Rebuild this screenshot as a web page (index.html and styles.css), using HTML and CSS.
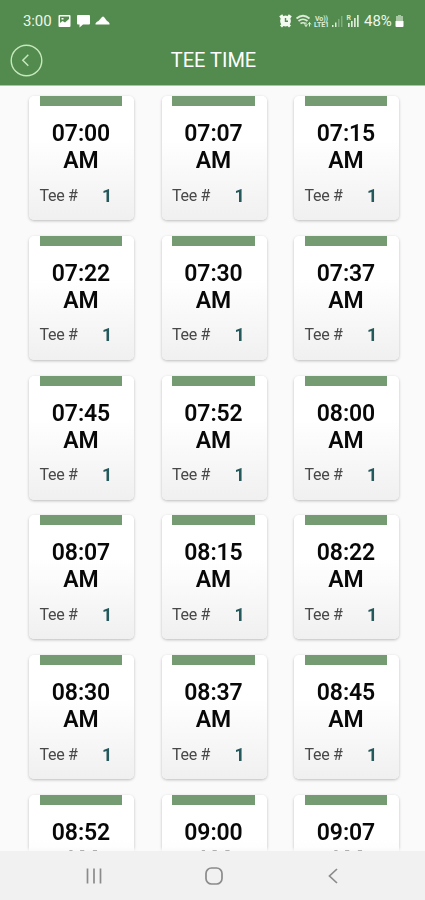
FILE: index.html
```html
<!DOCTYPE html>
<html lang="en">
<head>
    <meta charset="UTF-8">
    <meta name="viewport" content="width=device-width, initial-scale=1.0">
    <title>Tee Time</title>
    <link rel="stylesheet" href="styles.css">
</head>
<body>
    <header class="header">
        <div class="status-bar">
            <span class="clock">3:00</span>
            <svg class="status-left" width="54" height="14" viewBox="0 0 54 14">
                <path fill="#fff" fill-rule="evenodd" d="M2.500 1h10q1 0 1 1v10q0 1-1 1h-10q-1 0-1-1V2q0-1 1-1zM3 2.500v6.500l2.500-2 2.500 1.500 4-3.500v-2.500zM4.500 4h2v1.500h-2z"/>
                <path fill="#fff" d="M21 1h11q1 0 1 1v7.500q0 1-1 1h-6L22.500 13.500v-3H21q-1 0-1-1V2q0-1 1-1z"/>
                <path fill="#fff" d="M38.500 10.500q-.5-2 3-3.500l3.500-4q1-.8 2 0l3 4q3 1.500 2.500 3.500z"/>
            </svg>
            <svg class="status-right" width="85" height="16" viewBox="0 0 85 16">
                <circle cx="7.500" cy="8" r="5.400" fill="#f4faf1"/>
                <path d="M2 4.500l3-2M10 2.500l3 2M3 13.500l2-2M12 13.500l-2-2" stroke="#f4faf1" stroke-width="2.800"/>
                <path d="M7.500 5v3.300h2.500" fill="none" stroke="#528b4d" stroke-width="1.400"/>
                <g fill="none" stroke="#dcebd8" stroke-width="1.700">
                    <path d="M18.500 5.500q6.500-5.500 13 0M20.500 8q4.500-3.500 9 0M22.500 10.500q2.500-1.500 5 0"/>
                    <path d="M28 9.500v4M26.500 11.500l1.500 2 1.500-2M31.500 13.500v-4M30 11.500l1.500-2 1.500 2" stroke-width="1"/>
                </g>
                <g class="volte">
                    <text x="37" y="7.500" textLength="13">Vo))</text>
                    <text x="36" y="14" textLength="15">LTE1</text>
                </g>
                <g fill="#dcebd8">
                    <path d="M54 12h1.500v2H54zM57 9.500h1.500V14H57z"/>
                    <path opacity=".35" d="M60 6h1.500v8H60zM63 3h1.500v11H63z"/>
                    <path d="M70 10h1.700v4H70zM73 8h1.700v6H73zM76 5h1.700v9H76zM79 2h1.700v12H79z"/>
                    <text class="roam" x="68.500" y="7">R</text>
                </g>
            </svg>
            <span class="percent">48%</span>
            <svg class="battery" width="9" height="14" viewBox="0 0 9 14">
                <path fill="#a9c6a5" d="M3 1h3v1h2v5H1V2h2z"/>
                <path fill="#fff" d="M.500 7h8v5q0 1-1 1h-6q-1 0-1-1z"/>
            </svg>
        </div>
        <div class="title-bar">
            <button class="back" aria-label="Back">
                <svg width="33" height="33" viewBox="0 0 33 33" fill="none" stroke="#c5e8bd">
                    <circle cx="16.500" cy="16.500" r="15.300" stroke-width="1.400"/>
                    <path d="M18.300 10.800l-5.500 5.500 5.500 5.500" stroke-width="1.500"/>
                </svg>
            </button>
            <h1>TEE TIME</h1>
        </div>
    </header>

    <main class="tee-times" id="teeTimes"></main>

    <nav class="nav-bar">
        <svg width="18" height="18" viewBox="0 0 18 18" stroke="#8b8b8b" stroke-width="1.700">
            <path d="M2.500 1.500v15M9 1.500v15M15.500 1.500v15"/>
        </svg>
        <svg width="18" height="18" viewBox="0 0 18 18" fill="none" stroke="#8b8b8b" stroke-width="1.700">
            <rect x="1" y="1" width="16" height="16" rx="5.500"/>
        </svg>
        <svg width="18" height="18" viewBox="0 0 18 18" fill="none" stroke="#8b8b8b" stroke-width="1.700">
            <path d="M13 2L5.500 9l7.500 7"/>
        </svg>
    </nav>

    <script>
        const times = [
            '07:00', '07:07', '07:15',
            '07:22', '07:30', '07:37',
            '07:45', '07:52', '08:00',
            '08:07', '08:15', '08:22',
            '08:30', '08:37', '08:45',
            '08:52', '09:00', '09:07'
        ];

        // One card for each tee time
        document.getElementById('teeTimes').innerHTML = times.map(time => `
            <div class="card">
                <div class="card-bar"></div>
                <div class="time">${time}<br>AM</div>
                <div class="tee"><span>Tee #</span><span class="tee-number">1</span></div>
            </div>
        `).join('');
    </script>
</body>
</html>
```

FILE: styles.css
```css
* {
    box-sizing: border-box;
}
body {
    margin: 0;
    height: 900px;
    display: flex;
    flex-direction: column;
    overflow: hidden;
    background-color: #fafafa;
    font-family: Roboto, sans-serif;
}
svg {
    display: block;
    flex: none;
}
.header {
    flex: none;
    height: 86px;
    background-color: #528b4d;
    border-bottom: 1px solid #a5c99f;
    color: #fff;
}
.status-bar {
    display: flex;
    align-items: center;
    height: 42px;
    padding-left: 23px;
    font-size: 15px;
    color: #eef6ec;
}
.clock {
    width: 34px;
    letter-spacing: -0.1px;
}
.status-right {
    margin-left: 167px;
}
.volte {
    fill: #dcebd8;
    font-size: 7px;
    font-weight: bold;
}
.roam {
    font-size: 7px;
    font-weight: bold;
}
.percent {
    width: 30px;
    margin-left: 1px;
}
.battery {
    margin-left: 1px;
}
.title-bar {
    display: grid;
    grid-template-columns: 45px 1fr 45px;
    align-items: center;
    height: 36px;
    padding-left: 10px;
    padding-right: 8px;
}
.back {
    padding: 0;
    border: none;
    background: none;
}
h1 {
    margin: 0;
    font-size: 20px;
    font-weight: normal;
    line-height: 36px;
    text-align: center;
}
.tee-times {
    flex: 1;
    min-height: 0;
    overflow: hidden;
    display: grid;
    grid-template-columns: repeat(3, 105px);
    grid-auto-rows: 124px;
    column-gap: 27.5px;
    row-gap: 15.75px;
    align-content: start;
    padding: 10px 0 0 29px;
    /* cards fade out just above the nav bar */
    mask-image: linear-gradient(#000 calc(100% - 4px), rgba(0, 0, 0, 0.3) calc(100% - 1px));
}
.card {
    border-radius: 5px;
    background: linear-gradient(#fff 35%, #f0f0f0);
    box-shadow: 0 1px 3px rgba(0, 0, 0, 0.25);
}
.card-bar {
    height: 10px;
    margin: 0 12px 0 10.5px;
    background-color: #759b73;
}
.time {
    margin-top: 14px;
    padding-right: 1px;
    font-size: 23px;
    font-weight: 600;
    letter-spacing: -0.1px;
    line-height: 27px;
    text-align: center;
    color: #080808;
}
.tee {
    display: flex;
    justify-content: space-between;
    padding: 11.5px 22px 0 10.5px;
    font-size: 16px;
    letter-spacing: -0.3px;
    line-height: 20px;
    color: #484848;
}
.tee-number {
    font-size: 18px;
    font-weight: bold;
    color: #24585a;
}
.nav-bar {
    flex: none;
    display: flex;
    justify-content: space-between;
    height: 49px;
    padding: 16px 83px 0 85px;
    background-color: #f1f1f1;
}
```
